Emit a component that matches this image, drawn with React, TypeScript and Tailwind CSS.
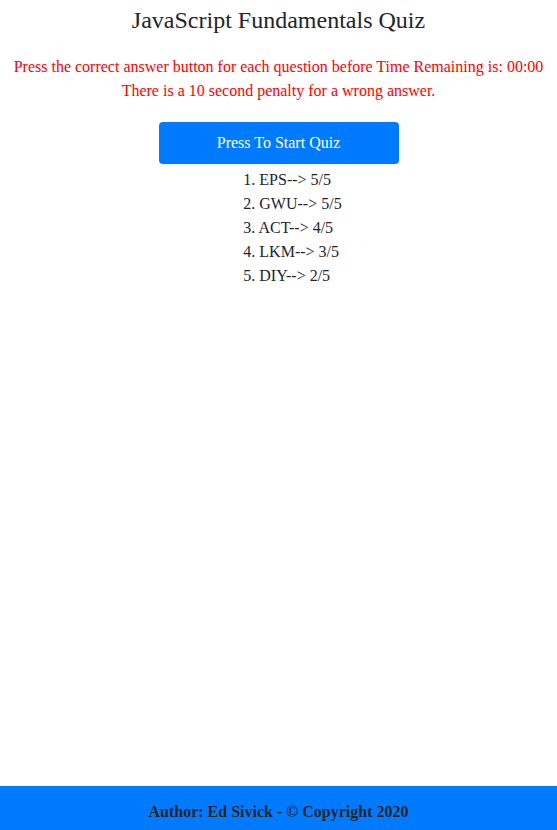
export default function App() {
    const scores = [
        { name: "EPS", score: "5/5" },
        { name: "GWU", score: "5/5" },
        { name: "ACT", score: "4/5" },
        { name: "LKM", score: "3/5" },
        { name: "DIY", score: "2/5" },
    ];

    return (
        <div className="flex min-h-screen flex-col bg-white font-['Liberation_Serif',serif] text-[#212529]">
            <main className="flex-1">
                {/* Título */}
                <h1 className="pt-[6px] text-center text-[24px] leading-[29px]">
                    JavaScript Fundamentals Quiz
                </h1>

                {/* Instrucciones */}
                <div className="mt-[20px] text-center text-[16px] leading-[24px] text-[#ff0000]">
                    <p>Press the correct answer button for each question before Time Remaining is: 00:00</p>
                    <p>There is a 10 second penalty for a wrong answer.</p>
                </div>

                {/* Botón */}
                <div className="mt-[19px] flex justify-center">
                    <button className="h-[42px] w-[240px] rounded-[4px] bg-[#007bff] text-[16px] text-white">
                        Press To Start Quiz
                    </button>
                </div>

                {/* Puntajes */}
                <ol className="mx-auto mt-[4px] w-fit pl-[28px] text-left text-[16px] leading-[24px]">
                    {scores.map((s, i) => (
                        <li key={s.name}>
                            {i + 1}. {s.name}--&gt; {s.score}
                        </li>
                    ))}
                </ol>
            </main>

            <footer className="flex h-[44px] items-center justify-center bg-[#007bff] pt-[7px] text-[16px] font-bold">
                Author: Ed Sivick - © Copyright 2020
            </footer>
        </div>
    );
}
